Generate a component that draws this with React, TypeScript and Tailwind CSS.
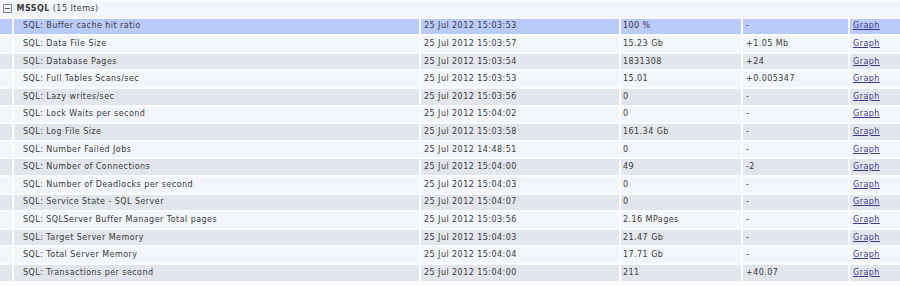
import React from "react";

type Row = { name: string; date: string; value: string; change: string };

const rows: Row[] = [
  { name: "SQL: Buffer cache hit ratio", date: "25 Jul 2012 15:03:53", value: "100 %", change: "-" },
  { name: "SQL: Data File Size", date: "25 Jul 2012 15:03:57", value: "15.23 Gb", change: "+1.05 Mb" },
  { name: "SQL: Database Pages", date: "25 Jul 2012 15:03:54", value: "1831308", change: "+24" },
  { name: "SQL: Full Tables Scans/sec", date: "25 Jul 2012 15:03:53", value: "15.01", change: "+0.005347" },
  { name: "SQL: Lazy writes/sec", date: "25 Jul 2012 15:03:56", value: "0", change: "-" },
  { name: "SQL: Lock Waits per second", date: "25 Jul 2012 15:04:02", value: "0", change: "-" },
  { name: "SQL: Log File Size", date: "25 Jul 2012 15:03:58", value: "161.34 Gb", change: "-" },
  { name: "SQL: Number Failed Jobs", date: "25 Jul 2012 14:48:51", value: "0", change: "-" },
  { name: "SQL: Number of Connections", date: "25 Jul 2012 15:04:00", value: "49", change: "-2" },
  { name: "SQL: Number of Deadlocks per second", date: "25 Jul 2012 15:04:03", value: "0", change: "-" },
  { name: "SQL: Service State - SQL Server", date: "25 Jul 2012 15:04:07", value: "0", change: "-" },
  { name: "SQL: SQLServer Buffer Manager Total pages", date: "25 Jul 2012 15:03:56", value: "2.16 MPages", change: "-" },
  { name: "SQL: Target Server Memory", date: "25 Jul 2012 15:04:03", value: "21.47 Gb", change: "-" },
  { name: "SQL: Total Server Memory", date: "25 Jul 2012 15:04:04", value: "17.71 Gb", change: "-" },
  { name: "SQL: Transactions per second", date: "25 Jul 2012 15:04:00", value: "211", change: "+40.07" },
];

export default function App() {
  return (
    <div
      className="w-[900px] h-[286px] overflow-hidden bg-[#fafcfd] text-[#3a3a3a] text-[8px] tracking-[0.45px] leading-none flex flex-col gap-[2px] pt-[1px]"
      style={{ fontFamily: '"DejaVu Sans", Verdana, sans-serif' }}
    >
      <div className="h-[15.6px] shrink-0 bg-[#f2f6fa] flex items-center">
        <svg width="9" height="9" viewBox="0 0 9 9" className="ml-[2.5px] mr-[5px]">
          <rect x="0.5" y="0.5" width="8" height="8" fill="#f4f4f4" stroke="#8a8a8a" />
          <rect x="2" y="4" width="5" height="1" fill="#555" />
        </svg>
        <span className="font-bold">MSSQL</span>
        <span className="ml-[3px]">(15 Items)</span>
      </div>
      {rows.map((r, i) => {
        const bg = i === 0 ? "bg-[#bacafa]" : i % 2 === 0 ? "bg-[#e2e6ec]" : "bg-[#f2f6fa]";
        return (
          <div
            key={r.name}
            className="h-[15.6px] shrink-0 grid grid-cols-[12px_405px_198px_120px_105px_1fr] gap-x-[2px]"
          >
            <div className={bg} />
            <div className={`${bg} flex items-center pl-[9px]`}>{r.name}</div>
            <div className={`${bg} flex items-center pl-[3px]`}>{r.date}</div>
            <div className={`${bg} flex items-center pl-[2px]`}>{r.value}</div>
            <div className={`${bg} flex items-center pl-[3px]`}>{r.change}</div>
            <div className={`${bg} flex items-center pl-[3px]`}>
              <a href="#" className="text-[#3a3a94] underline">Graph</a>
            </div>
          </div>
        );
      })}
    </div>
  );
}
